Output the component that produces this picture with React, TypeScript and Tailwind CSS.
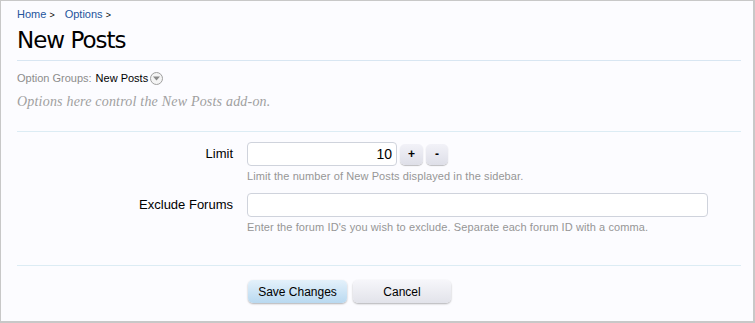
const sans = "font-['Liberation_Sans',Arial,sans-serif]";

function FieldRow({
  label,
  hint,
  children,
}: {
  label: string;
  hint: string;
  children: React.ReactNode;
}) {
  return (
    <div className="flex">
      <div className="w-[230px] shrink-0 pt-[4px] pr-[14px] text-right text-[13px] leading-[16px] text-black">
        {label}
      </div>
      <div className="flex flex-col">
        {children}
        <p className="mt-[4px] text-[11px] leading-[13px] tracking-[0.1px] text-[#969696]">
          {hint}
        </p>
      </div>
    </div>
  );
}

export default function App() {
  return (
    <div
      className={`${sans} h-[323px] w-[755px] overflow-hidden border-t border-l border-r-2 border-b-2 border-[#c8c8c8] bg-[#fcfcff]`}
    >
      <div className="pl-[16px] pr-[12px]">
        <nav className="mt-[7px] flex gap-[10px] text-[11px] leading-[13px] text-[#24549c]">
          <span>
            Home <span className="text-[9px] text-black">&gt;</span>
          </span>
          <span>
            Options <span className="text-[9px] text-black">&gt;</span>
          </span>
        </nav>
        <h1 className="mt-[4px] font-['DejaVu_Sans',sans-serif] text-[23px] leading-[28px] tracking-[-1px] text-black">
          New Posts
        </h1>
        <div className="mt-[6px] h-px bg-[#d8e6f2]" />

        <div className="mt-[10px] flex h-[14px] items-center text-[11px] leading-[14px]">
          <span className="text-[#8c8c8c]">Option Groups:</span>
          <span className="ml-[4px] text-black">New Posts</span>
          <span className="ml-[2px] flex h-[13px] w-[13px] items-center justify-center rounded-full border border-[#a0a0a0] bg-[#f4f4f4]">
            <svg width="7" height="5" viewBox="0 0 7 5">
              <path d="M0 0.5 L7 0.5 L3.5 4.5 Z" fill="#8a8a8a" />
            </svg>
          </span>
        </div>
        <p className="mt-[8px] font-['Liberation_Serif',serif] text-[14px] leading-[18px] tracking-[0.2px] italic text-[#a0a0a0]">
          Options here control the New Posts add-on.
        </p>
        <div className="mt-[20px] h-px bg-[#dcecf4]" />

        <div className="mt-[10px] flex flex-col gap-[10px]">
          <FieldRow
            label="Limit"
            hint="Limit the number of New Posts displayed in the sidebar."
          >
            <div className="flex items-center gap-[3px]">
              <div className="flex h-[24px] w-[150px] items-center justify-end rounded-[4px] border border-[#cfd3dc] bg-white pr-[4px] text-[14px] text-black">
                10
              </div>
              <button className="h-[21px] w-[23px] rounded-[5px] bg-gradient-to-b from-[#f2f2f8] to-[#dedfe8] text-[12px] font-bold text-black shadow-[0_1px_1px_rgba(0,0,0,0.25)]">
                +
              </button>
              <button className="h-[21px] w-[22px] rounded-[5px] bg-gradient-to-b from-[#f2f2f8] to-[#dedfe8] text-[12px] font-bold text-black shadow-[0_1px_1px_rgba(0,0,0,0.25)]">
                -
              </button>
            </div>
          </FieldRow>
          <FieldRow
            label="Exclude Forums"
            hint="Enter the forum ID's you wish to exclude. Separate each forum ID with a comma."
          >
            <div className="h-[24px] w-[461px] rounded-[4px] border border-[#cfd3dc] bg-white" />
          </FieldRow>
        </div>

        <div className="mt-[31px] h-px bg-[#dcecf4]" />

        <div className="mt-[14px] flex gap-[6px] pl-[231px]">
          <button className="h-[23px] w-[99px] rounded-[5px] bg-gradient-to-b from-[#e4f1fb] to-[#b9d9f0] text-[12px] text-black shadow-[0_1px_2px_rgba(0,0,0,0.3)]">
            Save Changes
          </button>
          <button className="h-[23px] w-[98px] rounded-[5px] bg-gradient-to-b from-[#f6f6fa] to-[#e2e3ea] text-[12px] text-black shadow-[0_1px_2px_rgba(0,0,0,0.3)]">
            Cancel
          </button>
        </div>
      </div>
    </div>
  );
}
